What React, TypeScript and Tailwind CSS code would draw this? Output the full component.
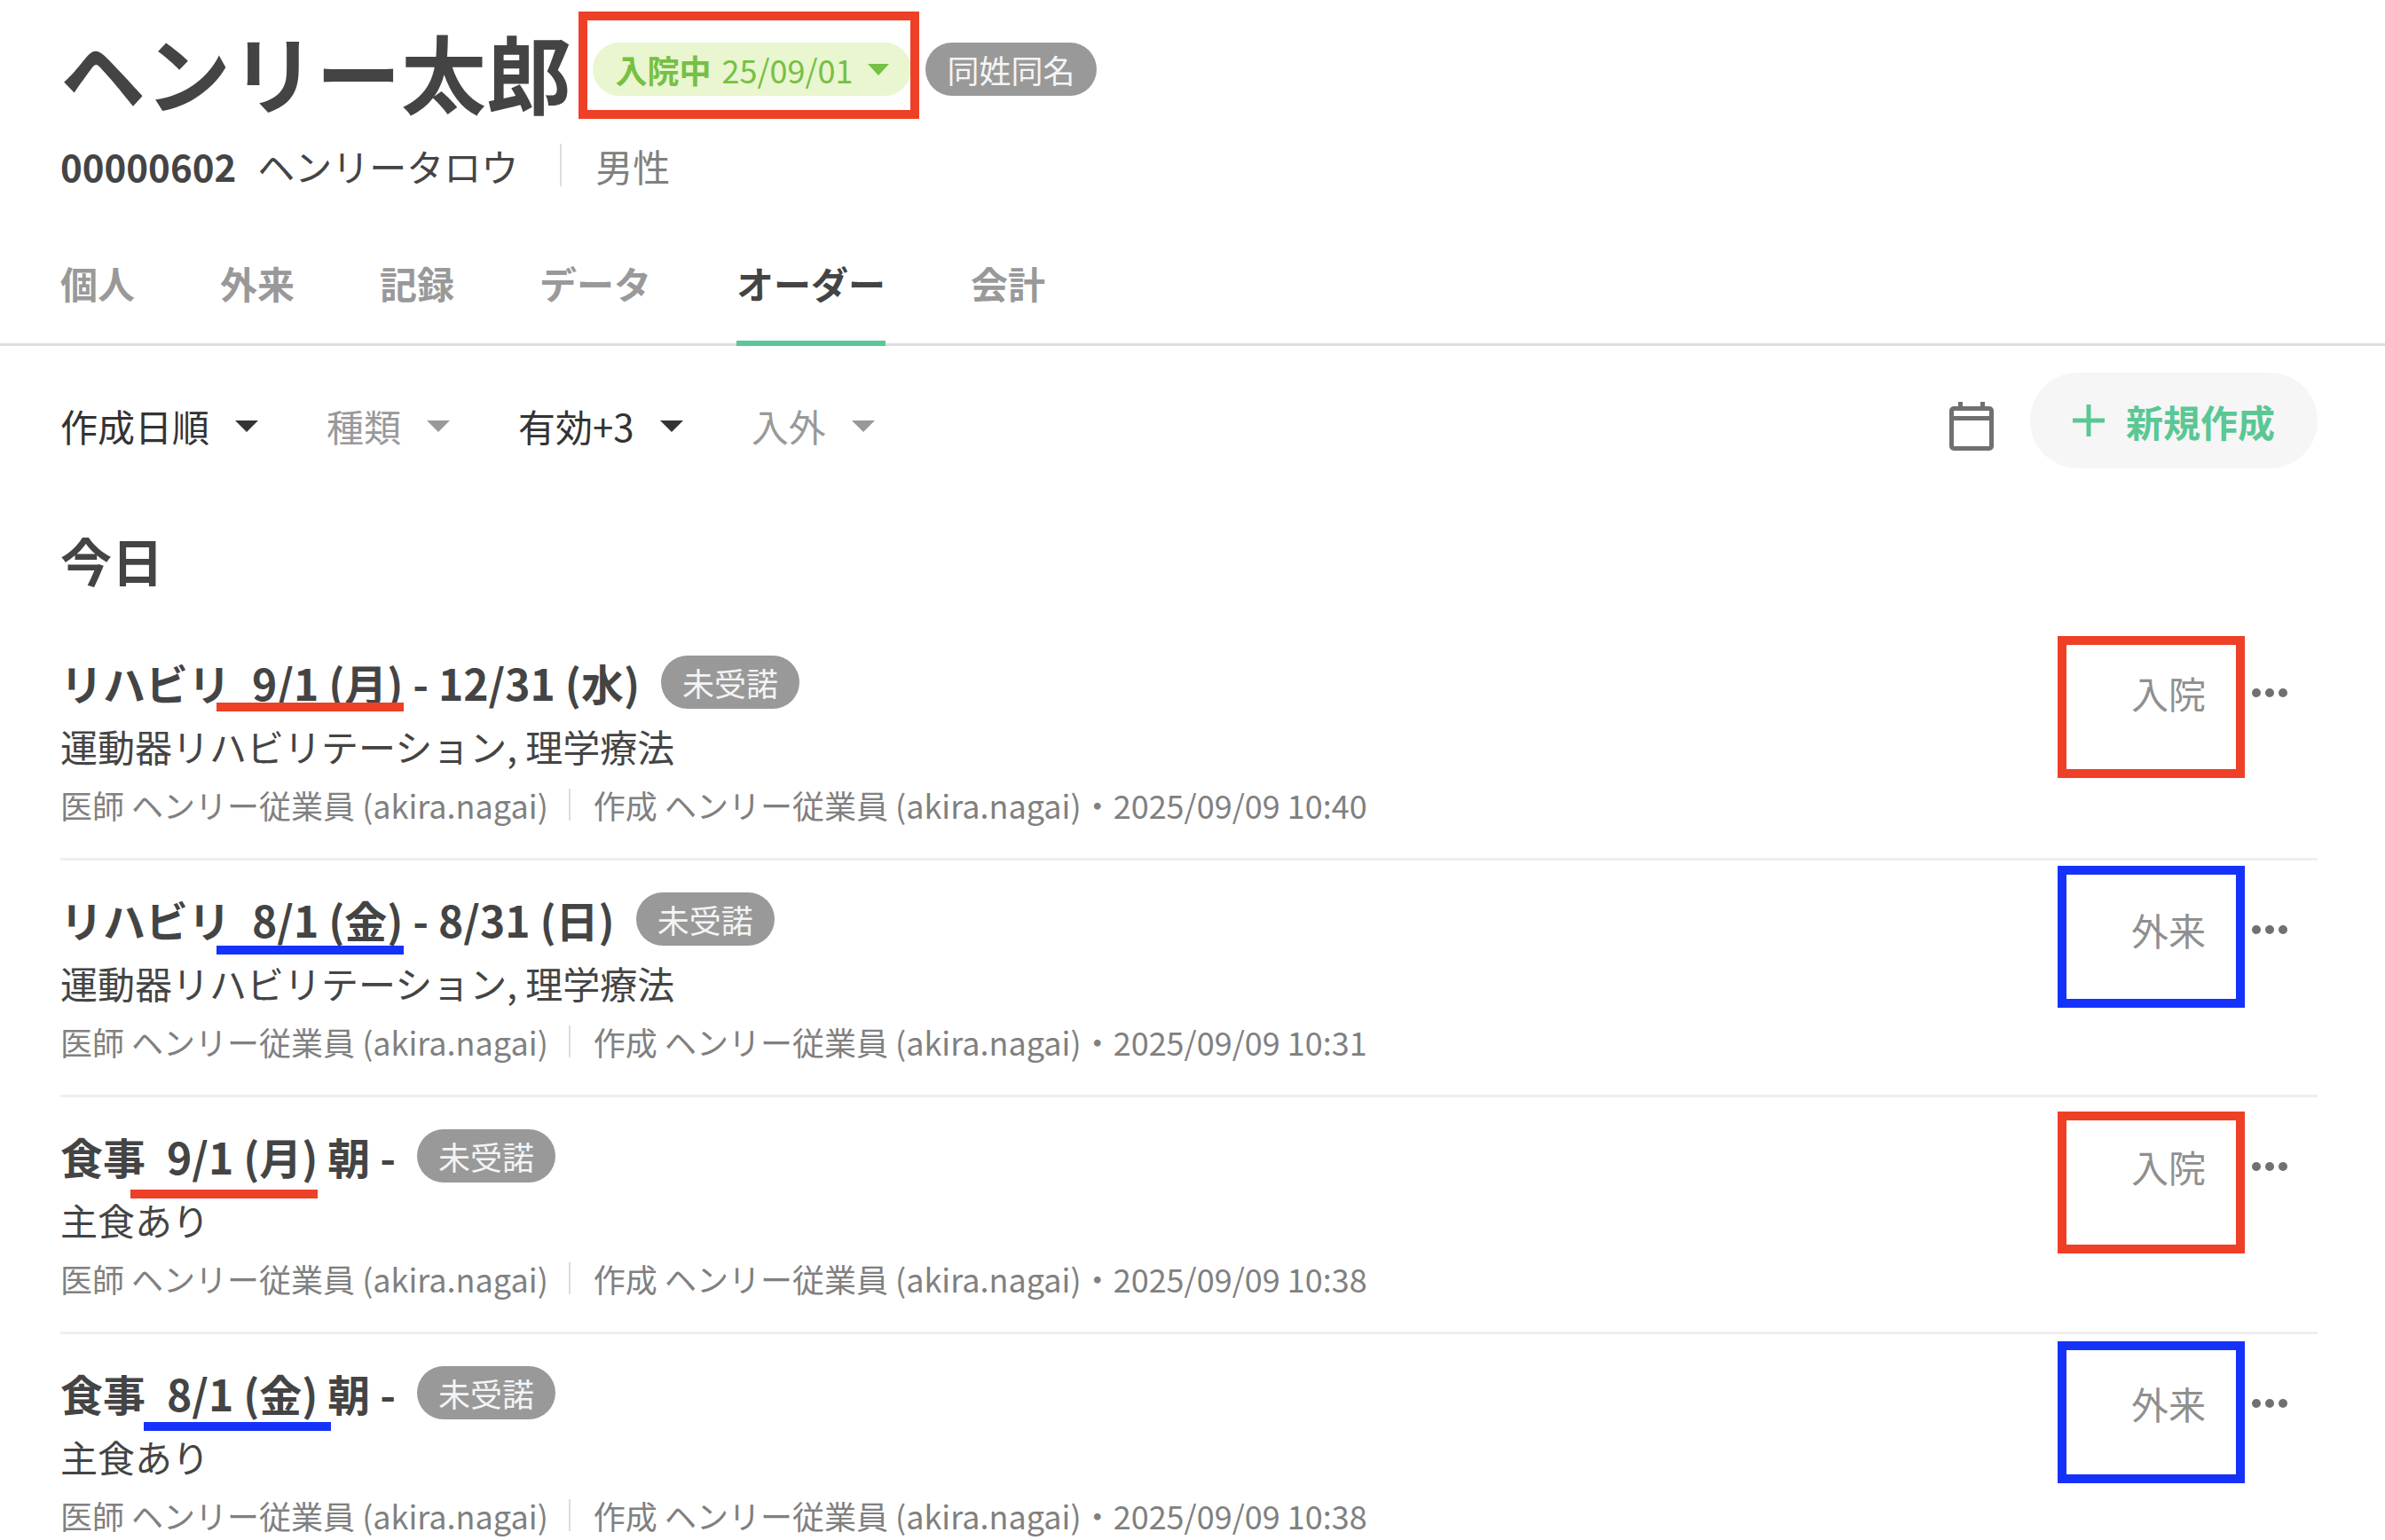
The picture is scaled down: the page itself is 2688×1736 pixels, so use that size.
import React from 'react'

const Caret = ({ dark }: { dark?: boolean }) => (
  <span className={`ml-[29px] h-0 w-0 border-x-[13px] border-t-[13px] border-x-transparent ${dark ? 'border-t-[#333333]' : 'border-t-[#999999]'}`}></span>
)

const Filter = ({ label, dark, className }: { label: string; dark?: boolean; className: string }) => (
  <div className={`flex items-center ${className}`}>
    <span className={`text-[42px] leading-[60px] ${dark ? 'text-[#333333]' : 'text-[#999999]'}`}>{label}</span>
    <Caret dark={dark} />
  </div>
)

const rows = [
  { name: 'リハビリ', date: '9/1 (月)', rest: '- 12/31 (水)', sub: '運動器リハビリテーション, 理学療法', time: '10:40', kind: '入院', blue: false, line: 'left-[176px] top-[89px]', box: 'top-[14px]' },
  { name: 'リハビリ', date: '8/1 (金)', rest: '- 8/31 (日)', sub: '運動器リハビリテーション, 理学療法', time: '10:31', kind: '外来', blue: true, line: 'left-[176px] top-[96px]', box: 'top-[6px]' },
  { name: '食事', date: '9/1 (月)', rest: '朝 -', sub: '主食あり', time: '10:38', kind: '入院', blue: false, line: 'left-[79px] top-[104px]', box: 'top-[16px]' },
  { name: '食事', date: '8/1 (金)', rest: '朝 -', sub: '主食あり', time: '10:38', kind: '外来', blue: true, line: 'left-[94px] top-[99px]', box: 'top-[8px]' },
]

const OrderRow = ({ row }: { row: (typeof rows)[number] }) => (
  <div className="relative flex h-[267px] justify-between border-b-[3px] border-[#efefef]">
    <div className="pt-[31px]">
      <div className="flex h-[70px] items-center">
        <span className="text-[48px] font-bold leading-[70px] text-[#444444]">
          {row.name}
          <span className="ml-[24px]">{row.date}</span> {row.rest}
        </span>
        <span className="ml-[24px] flex h-[60px] w-[156px] items-center justify-center rounded-full bg-[#999999] text-[36px] text-[#f4f4f4]">未受諾</span>
      </div>
      <div className="mt-[7px] text-[42px] leading-[60px] text-[#444444]">{row.sub}</div>
      <div className="mt-[10px] flex items-center text-[36px] leading-[52px] text-[#808080]">
        <span>医師 ヘンリー従業員 (akira.nagai)</span>
        <span className="ml-[23px] mr-[26px] h-[36px] w-[2px] bg-[#dddddd]"></span>
        <span>作成 ヘンリー従業員 (akira.nagai)・2025/09/09 {row.time}</span>
      </div>
    </div>
    <div className="flex items-start pr-[34px] pt-[50px]">
      <span className="text-[42px] leading-[56px] text-[#8f8f8f]">{row.kind}</span>
      <div className="ml-[52px] mt-[23px] flex gap-[5px]">
        <span className="h-[10px] w-[10px] rounded-full bg-[#707070]"></span>
        <span className="h-[10px] w-[10px] rounded-full bg-[#707070]"></span>
        <span className="h-[10px] w-[10px] rounded-full bg-[#707070]"></span>
      </div>
    </div>
    {/* annotation marks drawn over the screenshot */}
    <div className={`absolute h-[10px] w-[211px] ${row.line} ${row.blue ? 'bg-[#1532fb]' : 'bg-[#ee4026]'}`}></div>
    <div className={`absolute right-[82px] h-[160px] w-[211px] border-[10px] ${row.box} ${row.blue ? 'border-[#1532fb]' : 'border-[#ee4026]'}`}></div>
  </div>
)

export default function App() {
  return (
    <div className="h-[1736px] w-[2688px] overflow-hidden bg-white font-['Noto_Sans_CJK_JP','Noto_Sans',sans-serif]">
      <header className="px-[68px] pt-[20px]">
        <div className="flex h-[116px] items-center">
          <h1 className="mt-[4px] text-[96px] font-bold leading-[116px] text-[#444444]">ヘンリー太郎</h1>
          <div className="relative ml-[24px] flex h-[60px] w-[359px] items-center justify-center rounded-full bg-[#e9f6cf] text-[36px] text-[#76c043]">
            <span className="font-bold">入院中</span>
            <span className="ml-[12px]">25/09/01</span>
            <span className="ml-[16px] h-0 w-0 border-x-[12px] border-t-[13px] border-x-transparent border-t-[#76c043]"></span>
            <div className="absolute left-[-16px] top-[-35px] h-[121px] w-[384px] border-[10px] border-[#ee4026]"></div>
          </div>
          <span className="ml-[16px] flex h-[60px] w-[193px] items-center justify-center rounded-full bg-[#999999] text-[36px] text-[#f4f4f4]">同姓同名</span>
        </div>
        <div className="mt-[26px] flex h-[48px] items-center text-[42px] text-[#444444]">
          <span className="font-bold">00000602</span>
          <span className="ml-[24px]">ヘンリータロウ</span>
          <span className="ml-[47px] h-[48px] w-[2px] bg-[#dddddd]"></span>
          <span className="ml-[38px] text-[#808080]">男性</span>
        </div>
      </header>

      <nav className="mt-[76px] flex h-[104px] gap-[96px] border-b-[3px] border-[#dddddd] px-[68px] text-[42px] font-bold text-[#999999]">
        <span className="leading-[66px]">個人</span>
        <span className="leading-[66px]">外来</span>
        <span className="leading-[66px]">記録</span>
        <span className="leading-[66px]">データ</span>
        <span className="h-[104px] border-b-[6px] border-[#5ac794] leading-[66px] text-[#444444]">オーダー</span>
        <span className="leading-[66px]">会計</span>
      </nav>

      <section className="pl-[68px] pr-[76px]">
        <div className="mt-[30px] flex h-[108px] items-center">
          <Filter label="作成日順" dark className="mt-[12px]" />
          <Filter label="種類" className="ml-[77px] mt-[12px]" />
          <Filter label="有効+3" dark className="ml-[77px] mt-[12px]" />
          <Filter label="入外" className="ml-[77px] mt-[12px]" />
          <div className="ml-auto flex items-center">
            <svg className="mt-[12px]" width="54" height="58" viewBox="0 0 54 58" fill="none" stroke="#707070" strokeWidth="5">
              <rect x="4.500" y="9.500" width="45" height="45" rx="2.500" />
              <path d="M4.500 20.500H49.500M14.500 2V9M39.500 2V9" />
            </svg>
            <button className="ml-[39px] flex h-[108px] w-[324px] items-center justify-center rounded-full bg-[#f6f6f6] text-[42px] font-bold text-[#5ac794]">
              <svg width="36" height="36" viewBox="0 0 36 36" stroke="#5ac794" strokeWidth="5">
                <path d="M18 0V36M0 18H36" />
              </svg>
              <span className="ml-[24px]">新規作成</span>
            </button>
          </div>
        </div>
        <h2 className="mb-[32px] mt-[63px] text-[58px] font-bold leading-[80px] text-[#444444]">今日</h2>
        {rows.map((row, idx) => (
          <OrderRow key={idx} row={row} />
        ))}
      </section>
    </div>
  )
}
